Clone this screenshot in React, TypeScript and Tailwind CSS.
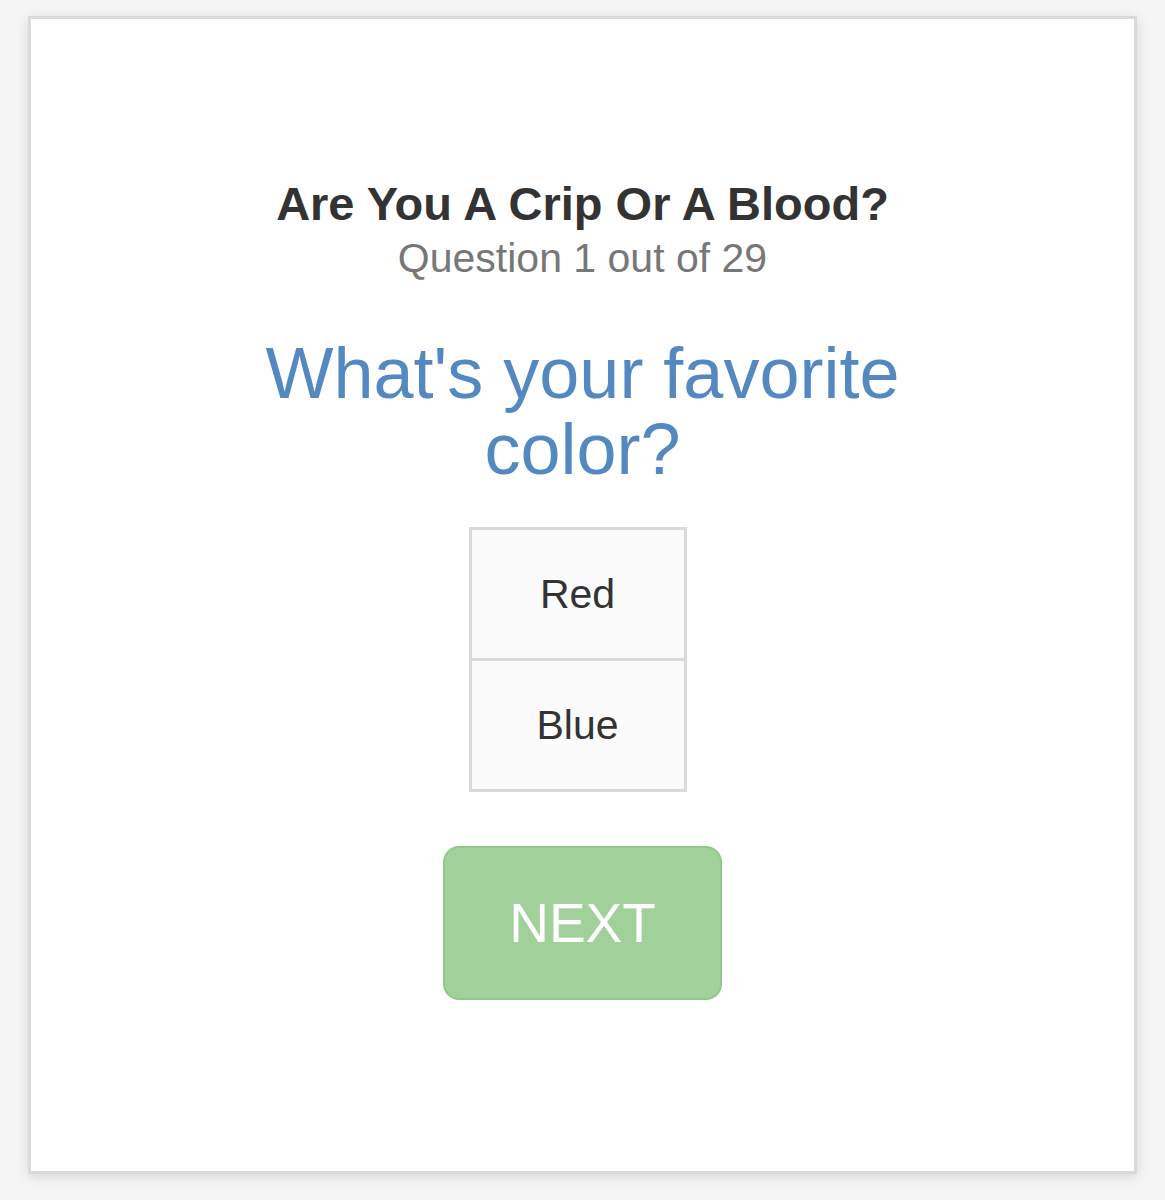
import { useState } from 'react';

const answers = ['Red', 'Blue'];

export default function QuizPage() {
  const [selected, setSelected] = useState('');

  return (
    <main className="min-h-screen bg-[#f5f5f5] px-7 pt-4 pb-6 font-['Helvetica_Neue','Liberation_Sans',Arial,sans-serif]">
      <form
        className="border-3 border-[#dadada] bg-white px-6 pt-[158px] pb-[171px] text-center shadow-[0_3px_12px_rgba(0,0,0,0.12)]"
        onSubmit={(e) => e.preventDefault()}
      >
        <h1 className="text-[47px] leading-[54px] font-bold text-[#333333]">Are You A Crip Or A Blood?</h1>
        <p className="text-[41px] leading-[54px] text-[#777777]">Question 1 out of 29</p>

        {/* Question */}
        <fieldset className="mt-[50px]">
          <legend className="mx-auto max-w-[700px] text-[72px] leading-[76px] text-[#5488c0]">
            What's your favorite color?
          </legend>

          {/* Answers */}
          <div className="mt-10 flex justify-center pr-[10px]">
            <div className="w-[218px] divide-y-3 divide-[#dadada] border-3 border-[#dadada] bg-[#fbfbfb]">
              {answers.map((answer) => (
                <label
                  key={answer}
                  className="block cursor-pointer py-[37px] text-[41px] leading-[54px] text-[#333333] has-checked:bg-[#e6e6e6]"
                >
                  <input
                    type="radio"
                    name="answer"
                    value={answer}
                    checked={selected === answer}
                    onChange={() => setSelected(answer)}
                    className="sr-only"
                  />
                  {answer}
                </label>
              ))}
            </div>
          </div>
        </fieldset>

        <button
          type="submit"
          disabled={!selected}
          className="mt-[54px] rounded-2xl border-2 border-[#4cae4c] bg-[#5cb85c] px-16 py-10 text-[55px] leading-[70px] text-white disabled:border-[#94c78e] disabled:bg-[#a1d09b]"
        >
          NEXT
        </button>
      </form>
    </main>
  );
}
